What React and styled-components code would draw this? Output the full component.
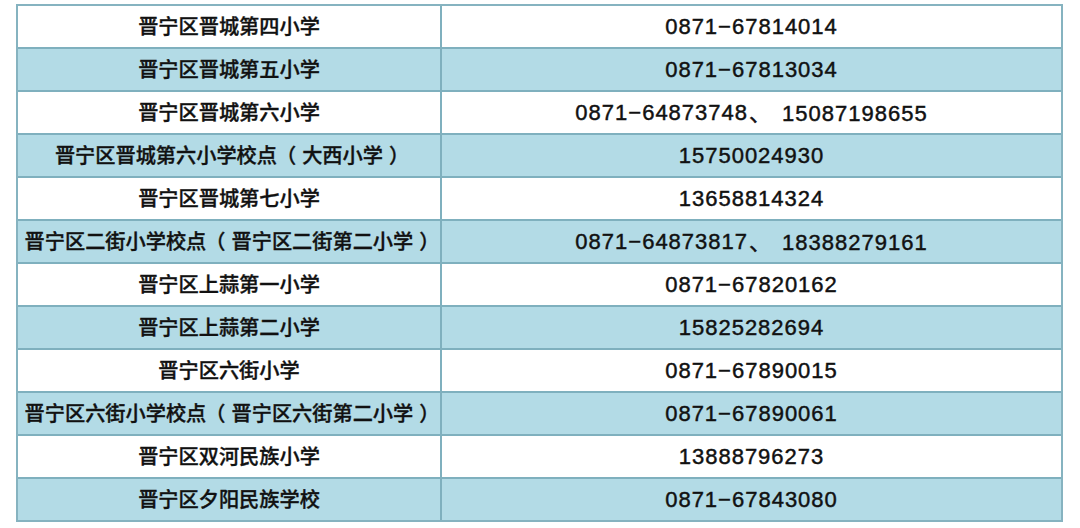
import styled, { createGlobalStyle } from "styled-components";

const GlobalStyle = createGlobalStyle`
  html, body {
    margin: 0;
    padding: 0;
    background: #ffffff;
  }
`;

const schools = [
  ["晋宁区晋城第四小学", ["0871−67814014"]],
  ["晋宁区晋城第五小学", ["0871−67813034"]],
  ["晋宁区晋城第六小学", ["0871−64873748", "15087198655"]],
  ["晋宁区晋城第六小学校点", ["15750024930"], "大西小学"],
  ["晋宁区晋城第七小学", ["13658814324"]],
  ["晋宁区二街小学校点", ["0871−64873817", "18388279161"], "晋宁区二街第二小学"],
  ["晋宁区上蒜第一小学", ["0871−67820162"]],
  ["晋宁区上蒜第二小学", ["15825282694"]],
  ["晋宁区六街小学", ["0871−67890015"]],
  ["晋宁区六街小学校点", ["0871−67890061"], "晋宁区六街第二小学"],
  ["晋宁区双河民族小学", ["13888796273"]],
  ["晋宁区夕阳民族学校", ["0871−67843080"]],
];

const Table = styled.div`
  margin: 4px 0 0 16px;
  width: 1047px;
  box-sizing: border-box;
  border: 2px solid #86b3c0;
  display: flex;
  flex-direction: column;
`;

const Row = styled.div`
  display: grid;
  grid-template-columns: 424px 1fr;
  height: 41px;
  background: ${(p) => (p.$shaded ? "#b3dbe6" : "#ffffff")};
  & + & {
    border-top: 2px solid #7fb0be;
  }
`;

const NameCell = styled.div`
  display: flex;
  align-items: center;
  justify-content: center;
  border-right: 2px solid #7fb0be;
  font-family: "Noto Sans CJK SC", "Noto Sans", sans-serif;
  font-size: 20.2px;
  font-weight: 500;
  line-height: 1;
  color: #111111;
  -webkit-text-stroke: 0.35px #111111;
  white-space: nowrap;
`;

// fullwidth brackets sit with some air on both sides in the source
const Paren = styled.span`
  display: inline-block;
  position: relative;
  margin-right: ${(p) => (p.$close ? "0" : "5px")};
  left: ${(p) => (p.$close ? "6px" : "-1px")};
`;

const PhoneCell = styled.div`
  display: flex;
  align-items: center;
  justify-content: center;
  font-family: "Liberation Sans", Arial, sans-serif;
  font-size: 22px;
  line-height: 1;
  letter-spacing: 1px;
  color: #111111;
  -webkit-text-stroke: 0.45px #111111;
  white-space: nowrap;
`;

const Sep = styled.span`
  display: inline-block;
  width: 34px;
  font-family: "Noto Sans CJK SC", sans-serif;
  letter-spacing: 0;
  text-indent: 1px;
`;

export default function App() {
  return (
    <>
      <GlobalStyle />
      <Table>
        {schools.map(([name, phones, note], i) => (
          <Row key={name + i} $shaded={i % 2 === 1}>
            <NameCell>
              {name}
              {note && (
                <>
                  <Paren>（</Paren>
                  {note}
                  <Paren $close>）</Paren>
                </>
              )}
            </NameCell>
            <PhoneCell>
              {phones.map((p, j) => (
                <span key={p}>
                  {j > 0 && <Sep>、</Sep>}
                  {p}
                </span>
              ))}
            </PhoneCell>
          </Row>
        ))}
      </Table>
    </>
  );
}
